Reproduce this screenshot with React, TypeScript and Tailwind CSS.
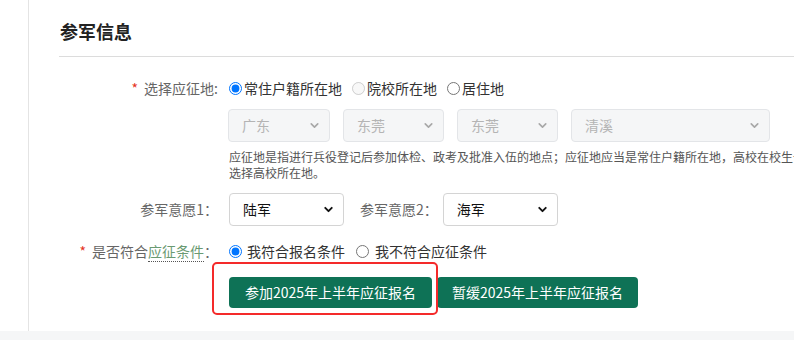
import { ChevronDown } from "lucide-react";

const Label = ({ star, children }: { star?: boolean; children: React.ReactNode }) => (
  <div className="w-[170px] shrink-0 pr-[11px] text-right text-[14px] text-[#666]">
    {star && <span className="mr-[6px] text-[#e5331f]">*</span>}
    {children}
  </div>
);

const Select = ({
  value,
  width,
  disabled,
}: {
  value: string;
  width: string;
  disabled?: boolean;
}) => (
  <div className={`relative ${width}`}>
    <select
      disabled={disabled}
      defaultValue={value}
      className={
        disabled
          ? "h-[33px] w-full appearance-none rounded-[4px] border border-[#e3e5e8] bg-[#f5f6f7] pl-[13px] text-[14px] text-[#b4b4b4]"
          : "h-[33px] w-full appearance-none rounded-[4px] border border-[#d4d4d4] bg-white pl-[13px] text-[14px] text-[#111]"
      }
    >
      <option>{value}</option>
    </select>
    <ChevronDown
      size={13}
      strokeWidth={disabled ? 3 : 3.5}
      className={`pointer-events-none absolute right-[9px] top-[10px] ${
        disabled ? "text-[#a8a8a8]" : "text-[#111]"
      }`}
    />
  </div>
);

const Radio = ({
  name,
  text,
  checked,
  disabled,
  gap,
}: {
  name: string;
  text: string;
  checked?: boolean;
  disabled?: boolean;
  gap: string;
}) => (
  <label className={`flex items-center ${gap} text-[14px] text-[#333]`}>
    <input
      type="radio"
      name={name}
      defaultChecked={checked}
      disabled={disabled}
      className="m-0 h-[13px] w-[13px]"
    />
    {text}
  </label>
);

export default function App() {
  return (
    <div className="relative h-[340px] w-[794px] overflow-hidden bg-white font-['Noto_Sans_CJK_SC','Noto_Sans',sans-serif]">
      <div className="flex h-[331px]">
        <div className="w-[28px] shrink-0" />
        <div className="flex-1 border-l border-[#e4e4e4] pl-[30px]">
          <div className="border-b border-[#dcdcdc] pb-[12px] pt-[18px]">
            <h2 className="ml-px h-[26px] text-[18px] font-bold leading-[26px] text-[#222]">
              参军信息
            </h2>
          </div>

          <div className="mt-[19px] flex h-[24px] items-center leading-[24px]">
            <Label star>选择应征地:</Label>
            <div className="flex items-center">
              <Radio name="place" text="常住户籍所在地" checked gap="gap-[2px]" />
              <div className="ml-[10px]">
                <Radio name="place" text="院校所在地" disabled gap="gap-[2px]" />
              </div>
              <div className="ml-[10px]">
                <Radio name="place" text="居住地" gap="gap-[2px]" />
              </div>
            </div>
          </div>

          <div className="ml-[169px] mt-[9px] flex gap-[13px]">
            <Select value="广东" width="w-[102px]" disabled />
            <Select value="东莞" width="w-[101px]" disabled />
            <Select value="东莞" width="w-[101px]" disabled />
            <Select value="清溪" width="w-[199px]" disabled />
          </div>

          <p className="ml-[170px] mt-[7px] w-[700px] text-[12px] leading-[16px] text-[#555]">
            应征地是指进行兵役登记后参加体检、政考及批准入伍的地点；应征地应当是常住户籍所在地，高校在校生也可以
            <br />
            选择高校所在地。
          </p>

          <div className="mt-[12px] flex items-center">
            <Label>参军意愿1：</Label>
            <Select value="陆军" width="w-[115px]" />
            <div className="ml-[16px] mr-[5px] text-[14px] text-[#666]">参军意愿2：</div>
            <Select value="海军" width="w-[115px]" />
          </div>

          <div className="mt-[13px] flex h-[24px] items-center leading-[24px]">
            <Label star>
              是否符合
              <span className="border-b border-dotted border-[#555] text-[#6a9a72] leading-[18px]">
                应征条件
              </span>
              ：
            </Label>
            <div className="flex items-center">
              <Radio name="ok" text="我符合报名条件" checked gap="gap-[5px]" />
              <div className="ml-[11px]">
                <Radio name="ok" text="我不符合应征条件" gap="gap-[6px]" />
              </div>
            </div>
          </div>

          <div className="ml-[170px] mt-[14px] flex gap-[5px]">
            <button className="h-[31px] w-[203px] rounded-[4px] bg-[#0e7256] text-[14px] text-white">
              参加2025年上半年应征报名
            </button>
            <button className="h-[31px] w-[201px] rounded-[4px] bg-[#0e7256] text-[14px] text-white">
              暂缓2025年上半年应征报名
            </button>
          </div>
        </div>
      </div>
      <div className="h-[9px] bg-[#f5f6f7]" />

      <div className="pointer-events-none absolute left-[212px] top-[262px] h-[53px] w-[226px] rounded-[5px] border-2 border-[#f42a2a]" />
    </div>
  );
}
